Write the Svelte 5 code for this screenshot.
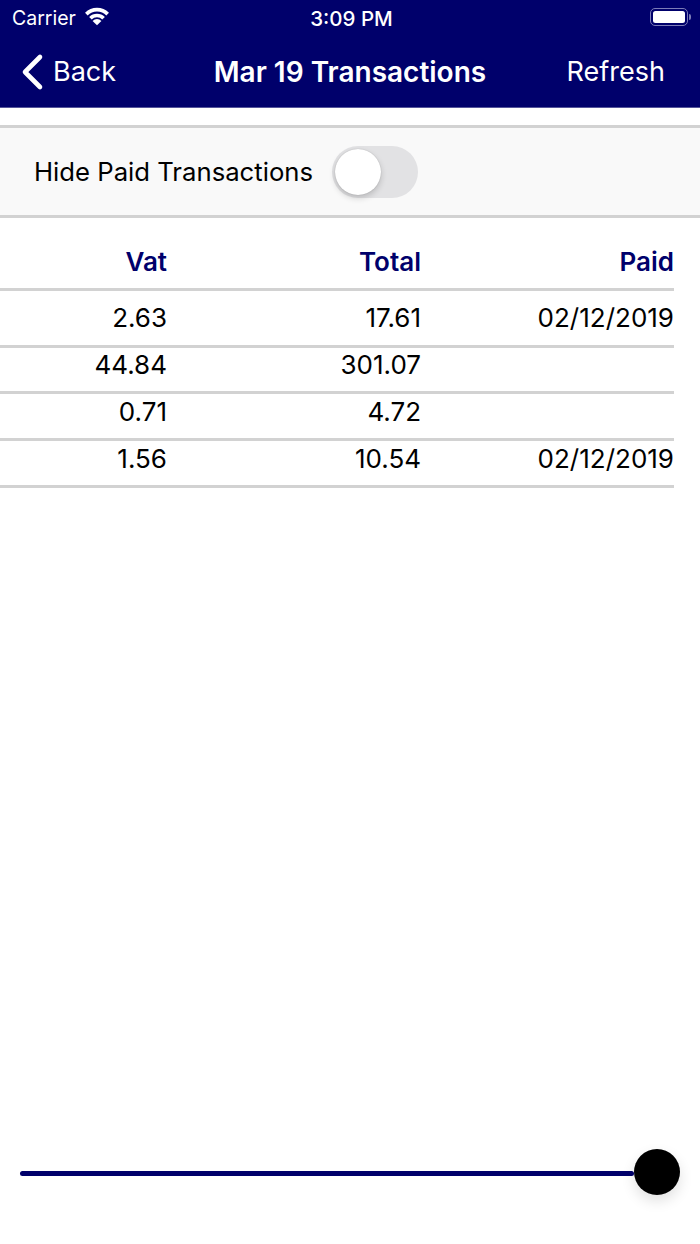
<script>
	const rows = [
		{ vat: '2.63', total: '17.61', paid: '02/12/2019' },
		{ vat: '44.84', total: '301.07', paid: '' },
		{ vat: '0.71', total: '4.72', paid: '' },
		{ vat: '1.56', total: '10.54', paid: '02/12/2019' }
	];
</script>

<div class="page">
	<header class="top">
		<div class="status">
			<div class="carrier">
				<span>Carrier</span>
				<svg class="wifi" width="28" height="19.400" viewBox="0 0 26 18">
					<path d="M3.100 6.600A14 14 0 0 1 22.900 6.600" fill="none" stroke="#fff" stroke-width="3.400" />
					<path d="M6.900 10.400A8.600 8.600 0 0 1 19.100 10.400" fill="none" stroke="#fff" stroke-width="3.400" />
					<path d="M13 17L8.900 12.900A5.800 5.800 0 0 1 17.100 12.900Z" fill="#fff" />
				</svg>
			</div>
			<span class="clock">3:09 PM</span>
			<div class="battery">
				<div class="battery-body"><div class="battery-fill"></div></div>
				<div class="battery-cap"></div>
			</div>
		</div>
		<nav class="nav">
			<div class="back">
				<svg width="24" height="38" viewBox="0 0 24 38">
					<path d="M20 4 L5 19 L20 34" fill="none" stroke="#fff" stroke-width="4.600" stroke-linecap="round" stroke-linejoin="round" />
				</svg>
				<span>Back</span>
			</div>
			<h1 class="title">Mar 19 Transactions</h1>
			<span class="refresh">Refresh</span>
		</nav>
	</header>

	<section class="filter">
		<span>Hide Paid Transactions</span>
		<div class="switch"><div class="knob"></div></div>
	</section>

	<div class="table">
		<div class="row head">
			<div>Vat</div>
			<div>Total</div>
			<div>Paid</div>
		</div>
		{#each rows as row, i}
			<div class="row" class:first={i === 0}>
				<div>{row.vat}</div>
				<div>{row.total}</div>
				<div>{row.paid}</div>
			</div>
		{/each}
	</div>

	<div class="slider">
		<div class="track"></div>
		<div class="thumb"></div>
	</div>
</div>

<style>
	:global(body) {
		margin: 0;
		background: #fff;
	}
	.page {
		display: flex;
		flex-direction: column;
		height: 1244px;
		font-family: Inter, "Liberation Sans", sans-serif;
		color: #000;
		overflow: hidden;
	}
	.top {
		height: 108px;
		background: #00006b;
		color: #fff;
		box-sizing: border-box;
		border-bottom: 1px solid #55559a;
	}
	.status {
		display: grid;
		grid-template-columns: 1fr auto 1fr;
		align-items: center;
		height: 36px;
		box-sizing: border-box;
		padding: 0 9px 0 12px;
	}
	.carrier {
		display: flex;
		align-items: center;
		gap: 7px;
		font-size: 19.500px;
	}
	.wifi {
		margin-top: -2px;
	}
	.clock {
		font-weight: 500;
		font-size: 20.500px;
	}
	.battery {
		display: flex;
		align-items: center;
		justify-content: flex-end;
		gap: 1px;
		margin-top: -2px;
	}
	.battery-body {
		width: 38px;
		height: 18px;
		box-sizing: border-box;
		border: 1.500px solid #7c7cb8;
		border-radius: 5px;
		padding: 2px;
	}
	.battery-fill {
		height: 100%;
		background: #fff;
		border-radius: 2.500px;
	}
	.battery-cap {
		width: 2px;
		height: 6px;
		background: #7c7cb8;
		border-radius: 0 2px 2px 0;
	}
	.nav {
		display: grid;
		grid-template-columns: 1fr auto 1fr;
		align-items: center;
		height: 71px;
		padding: 0 20px;
		font-size: 27px;
	}
	.back {
		display: flex;
		align-items: center;
		gap: 9px;
	}
	.title {
		margin: 0;
		font-size: 28px;
		font-weight: 600;
	}
	.refresh {
		justify-self: end;
		margin-right: 15px;
	}
	.filter {
		display: flex;
		align-items: center;
		gap: 19px;
		height: 93px;
		box-sizing: border-box;
		margin-top: 17px;
		padding-left: 34px;
		background: #f9f9f9;
		border-top: 3px solid #d2d2d2;
		border-bottom: 3px solid #d2d2d2;
		font-size: 25.700px;
	}
	.switch {
		width: 86px;
		height: 52px;
		box-sizing: border-box;
		padding: 3px;
		border-radius: 26px;
		background: #e2e2e4;
	}
	.knob {
		width: 46px;
		height: 46px;
		border-radius: 50%;
		background: #fff;
		box-shadow: 0 3px 6px rgba(0, 0, 0, 0.18), 0 0 1px rgba(0, 0, 0, 0.25);
	}
	.table {
		width: 674px;
		font-size: 26px;
	}
	.row {
		display: grid;
		grid-template-columns: 167px 254px 253px;
		align-items: center;
		height: 46.670px;
		box-sizing: border-box;
		padding-bottom: 9px;
		text-align: right;
		border-bottom: 3px solid #d2d2d2;
	}
	.row.first {
		height: 56.670px;
		padding-bottom: 0;
	}
	.row.head {
		height: 73px;
		padding-top: 16px;
		padding-bottom: 0;
		color: #00006b;
		font-weight: 600;
	}
	.slider {
		display: flex;
		align-items: center;
		margin-top: auto;
		margin-bottom: 49px;
		padding: 0 20px;
	}
	.track {
		flex: 1;
		height: 5px;
		margin-top: 2px;
		border-radius: 3px;
		background: #00006b;
	}
	.thumb {
		width: 46px;
		height: 46px;
		border-radius: 50%;
		background: #000;
		box-shadow: 0 6px 14px rgba(0, 0, 0, 0.12);
	}
</style>
